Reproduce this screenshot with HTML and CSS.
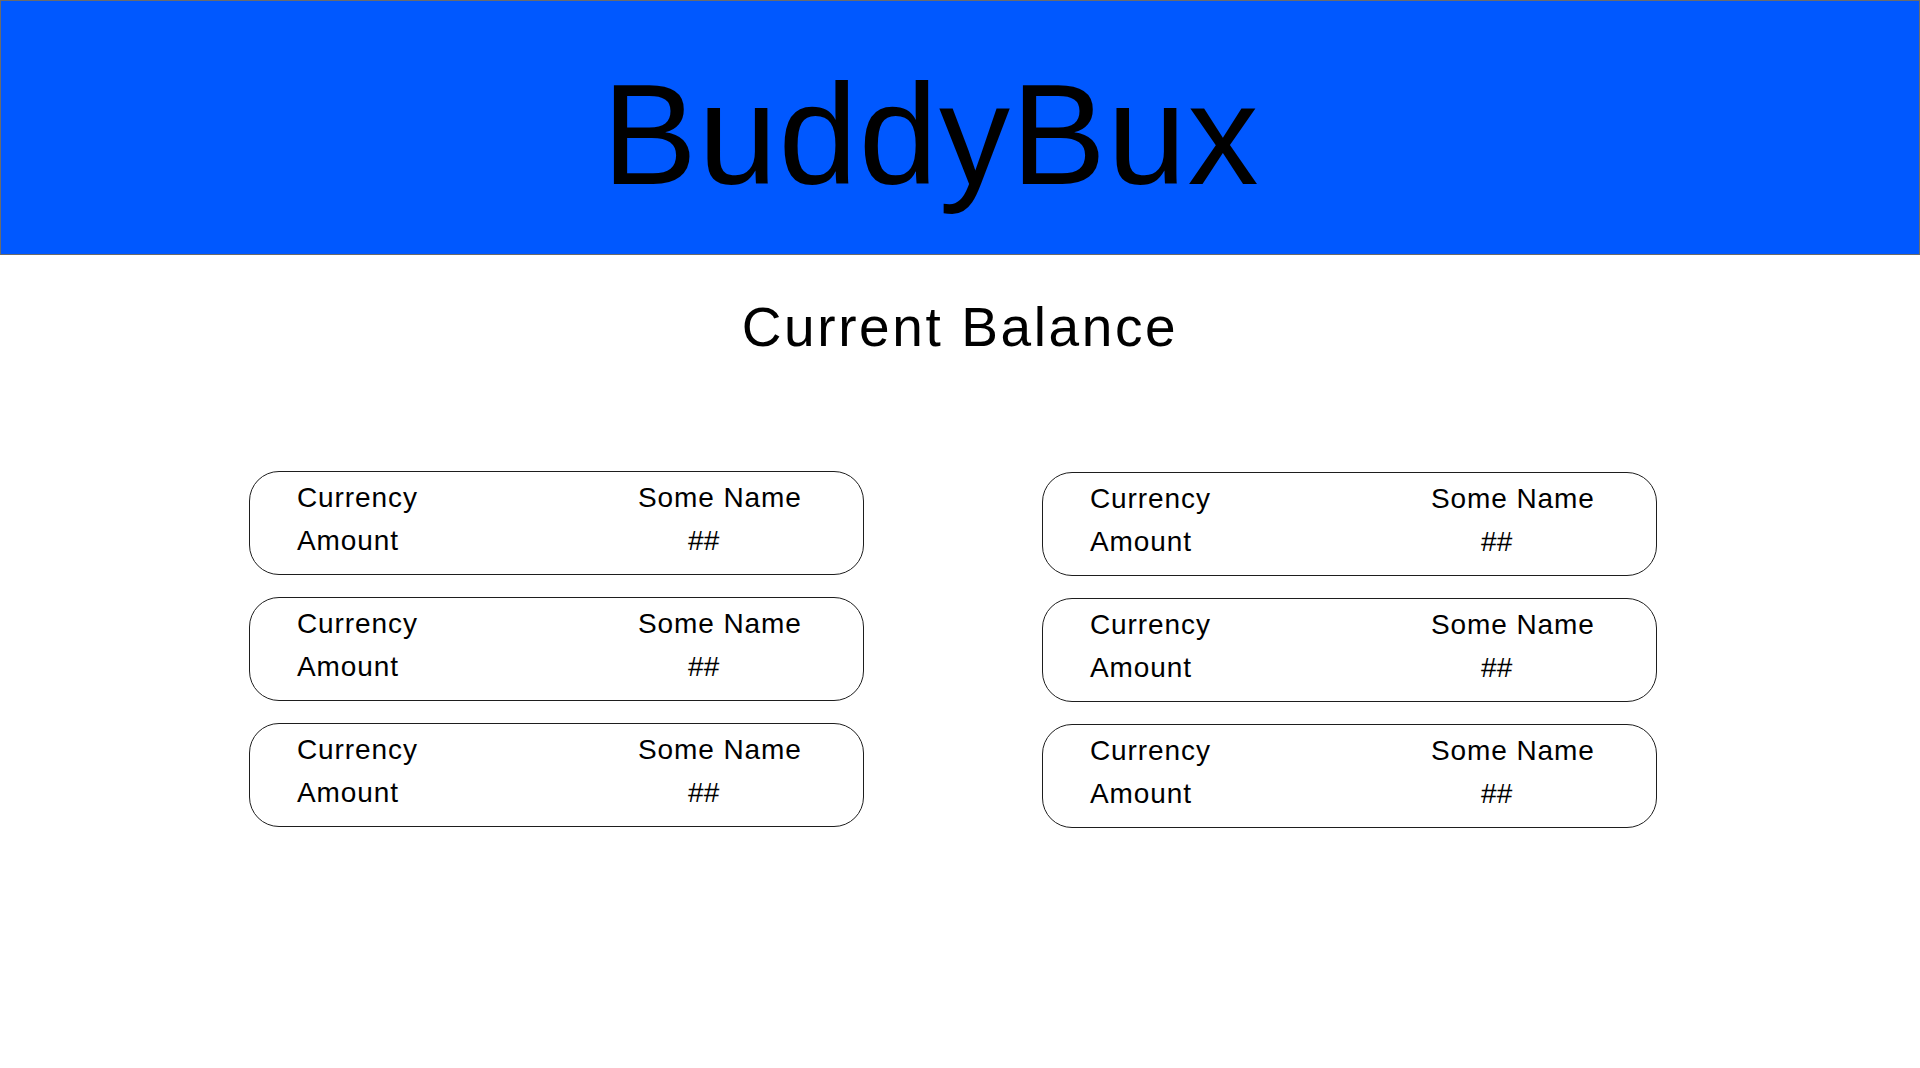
FILE: index.html
```html
<!DOCTYPE html>
<html lang="en">
<head>
<meta charset="utf-8">
<title>BuddyBux</title>
<link rel="stylesheet" href="styles.css">
</head>
<body>
<header class="topbar">
  <h1 class="brand">BuddyBux</h1>
</header>
<main class="content">
  <h2 class="section-title">Current Balance</h2>
  <div class="balances">
    <div class="column">
      <div class="card">
        <div class="card-left"><div>Currency</div><div>Amount</div></div>
        <div class="card-right"><div>Some Name</div><div class="num">##</div></div>
      </div>
      <div class="card">
        <div class="card-left"><div>Currency</div><div>Amount</div></div>
        <div class="card-right"><div>Some Name</div><div class="num">##</div></div>
      </div>
      <div class="card">
        <div class="card-left"><div>Currency</div><div>Amount</div></div>
        <div class="card-right"><div>Some Name</div><div class="num">##</div></div>
      </div>
    </div>
    <div class="column column-right">
      <div class="card">
        <div class="card-left"><div>Currency</div><div>Amount</div></div>
        <div class="card-right"><div>Some Name</div><div class="num">##</div></div>
      </div>
      <div class="card">
        <div class="card-left"><div>Currency</div><div>Amount</div></div>
        <div class="card-right"><div>Some Name</div><div class="num">##</div></div>
      </div>
      <div class="card">
        <div class="card-left"><div>Currency</div><div>Amount</div></div>
        <div class="card-right"><div>Some Name</div><div class="num">##</div></div>
      </div>
    </div>
  </div>
</main>
</body>
</html>
```
FILE: styles.css
```css
* {
  box-sizing: border-box;
}

html, body {
  margin: 0;
  padding: 0;
  background: #ffffff;
}

body {
  font-family: "Liberation Sans", Arial, Helvetica, sans-serif;
  color: #000000;
  width: 1920px;
  height: 1068px;
  overflow: hidden;
}

.topbar {
  height: 255px;
  background: #0058ff;
  border: 1px solid #6b6b6b;
  padding: 63px 58px 0 0;
  text-align: center;
}

.brand {
  margin: 0;
  font-size: 142px;
  line-height: 142px;
  font-weight: 400;
  letter-spacing: 1.3px;
  color: #000000;
}

.content {
  display: flex;
  flex-direction: column;
}

.section-title {
  margin: 45px 0 0 0;
  font-size: 55px;
  line-height: 55px;
  font-weight: 400;
  letter-spacing: 2.6px;
  text-align: center;
}

.balances {
  display: grid;
  grid-template-columns: 615px 615px;
  column-gap: 178px;
  margin: 116px 0 0 249px;
}

.column {
  display: flex;
  flex-direction: column;
  gap: 22px;
}

.column-right {
  padding-top: 1px;
}

.card {
  height: 104px;
  border: 1px solid #1e1e1e;
  border-radius: 30px;
  padding: 4px 0 12px 47px;
  display: grid;
  grid-template-columns: 341px 1fr;
  font-size: 28px;
  line-height: 43px;
  letter-spacing: 0.9px;
}

.card-right .num {
  padding-left: 50px;
  letter-spacing: 0.3px;
}
```
